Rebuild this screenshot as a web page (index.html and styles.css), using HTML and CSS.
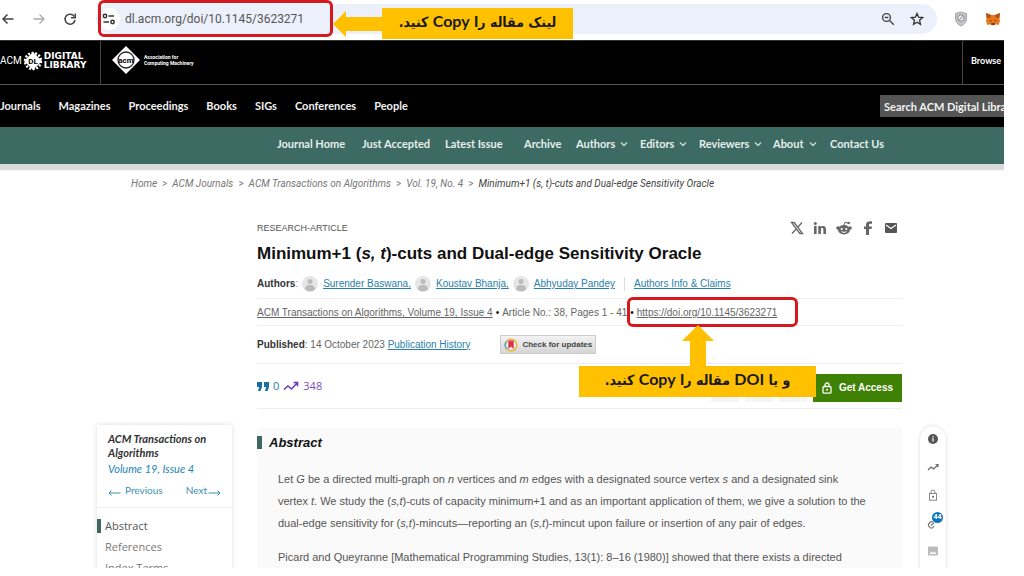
FILE: index.html
```html
<!DOCTYPE html>
<html lang="en">
<head>
<meta charset="utf-8">
<title>Minimum+1 (s, t)-cuts and Dual-edge Sensitivity Oracle</title>
<link rel="stylesheet" href="styles.css">
</head>
<body>
<div class="shot">
  <div class="browser-bar">
    <button class="tool" aria-label="Back"><svg width="14" height="14" viewBox="0 0 14 14"><path d="M12.500 7H2M6.500 2.500L2 7l4.500 4.500" fill="none" stroke="#444" stroke-width="1.500"/></svg></button>
    <button class="tool" aria-label="Forward"><svg width="14" height="14" viewBox="0 0 14 14"><path d="M1.500 7H12M7.500 2.500L12 7l-4.500 4.500" fill="none" stroke="#aaa" stroke-width="1.300"/></svg></button>
    <button class="tool" aria-label="Reload"><svg width="14" height="14" viewBox="0 0 14 14"><path d="M11.300 4.500A5 5 0 1 0 12 8" fill="none" stroke="#444" stroke-width="1.500"/><path d="M12.300 1.500v4.300H8" fill="none" stroke="#444" stroke-width="1.500"/></svg></button>
    <div class="omnibox">
      <span class="site-info"><svg width="14" height="12" viewBox="0 0 14 12"><g fill="none" stroke="#333" stroke-width="1.500"><circle cx="3" cy="3" r="1.700"/><path d="M6.500 3H12M1.500 9H7"/><circle cx="10.500" cy="9" r="1.700"/></g></svg></span>
      <input class="url" type="text" aria-label="Address" value="dl.acm.org/doi/10.1145/3623271">
      <button class="tool" aria-label="Zoom"><svg width="14" height="14" viewBox="0 0 14 14"><circle cx="5.500" cy="5.500" r="3.900" fill="none" stroke="#444" stroke-width="1.400"/><path d="M3.700 5.500h3.600M8.500 8.500l4.300 4.300" stroke="#444" stroke-width="1.400"/></svg></button>
      <button class="tool" aria-label="Bookmark"><svg width="14" height="14" viewBox="0 0 14 14"><path d="M7 1.500l1.600 3.700 4 .4-3 2.700.9 4L7 10.200l-3.500 2.100.9-4-3-2.700 4-.4z" fill="none" stroke="#333" stroke-width="1.300"/></svg></button>
    </div>
    <button class="tool" aria-label="Shield"><svg width="14" height="16" viewBox="0 0 14 16"><path d="M7 1l5.500 1.500v5c0 3.500-2.500 6-5.500 7.500-3-1.500-5.500-4-5.500-7.500v-5z" fill="#c3c6ca" stroke="#a2a6aa"/><circle cx="7" cy="7" r="3.200" fill="#eee" stroke="#888"/><path d="M5.500 8.500l3-3" stroke="#777"/></svg></button>
    <button class="tool" aria-label="Wallet"><svg width="16" height="14" viewBox="0 0 16 14"><path d="M1 1l5 2h4l5-2-.6 5 .6 3-1.500 4-3-.8-1.500 1h-2l-1.500-1-3 .8L1 9l.6-3z" fill="#e8761b"/><path d="M1 1l5 2-1 3H1.600zM15 1l-5 2 1 3h3.400z" fill="#b4521b"/><path d="M4.500 8l2 .5v1zM11.500 8l-2 .5v1z" fill="#222"/><path d="M6.300 11.200h3.400l.3 1.500H6z" fill="#553018"/></svg></button>
  </div>

  <header>
    <div class="brand-bar">
      <a class="dl-logo" href="#">
        <span>ACM</span>
        <svg width="20" height="20" viewBox="0 0 20 20"><circle cx="10" cy="10" r="8" fill="none" stroke="#fff" stroke-width="2.500" stroke-dasharray="2 1.600"/><path d="M10 1l9 9-9 9-9-9z" fill="#fff"/><text x="10" y="13" text-anchor="middle" class="dl-mark">DL</text></svg>
        <span class="dl-words">DIGITAL<br>LIBRARY</span>
      </a>
      <a class="acm-logo" href="#">
        <svg width="28" height="28" viewBox="0 0 28 28"><path d="M14 0l14 14-14 14L0 14z" fill="#fff"/><circle cx="14" cy="14" r="8" fill="#fff" stroke="#222" stroke-width="1.300"/><text x="14" y="17" text-anchor="middle" class="acm-mark">acm</text></svg>
        <span>Association for<br>Computing Machinery</span>
      </a>
      <a class="browse" href="#">Browse</a>
    </div>
    <div class="main-bar">
      <nav class="main-nav">
        <a href="#">Journals</a><a href="#">Magazines</a><a href="#">Proceedings</a><a href="#">Books</a><a href="#">SIGs</a><a href="#">Conferences</a><a href="#">People</a>
      </nav>
      <div class="search"><input type="text" aria-label="Search" value="Search ACM Digital Library"></div>
    </div>
    <nav class="journal-nav">
      <a href="#">Journal Home</a><a href="#">Just Accepted</a><a href="#">Latest Issue</a><a href="#">Archive</a>
      <a href="#">Authors <svg class="chev" width="8" height="6" viewBox="0 0 8 6"><path d="M1 1.500l3 3 3-3"/></svg></a>
      <a href="#">Editors <svg class="chev" width="8" height="6" viewBox="0 0 8 6"><path d="M1 1.500l3 3 3-3"/></svg></a>
      <a href="#">Reviewers <svg class="chev" width="8" height="6" viewBox="0 0 8 6"><path d="M1 1.500l3 3 3-3"/></svg></a>
      <a href="#">About <svg class="chev" width="8" height="6" viewBox="0 0 8 6"><path d="M1 1.500l3 3 3-3"/></svg></a>
      <a href="#">Contact Us</a>
    </nav>
  </header>

  <nav class="crumbs" aria-label="Breadcrumb">
    <a href="#">Home</a><i>&gt;</i><a href="#">ACM Journals</a><i>&gt;</i><a href="#">ACM Transactions on Algorithms</a><i>&gt;</i><a href="#">Vol. 19, No. 4</a><i>&gt;</i><a class="here" href="#">Minimum+1 (s, t)-cuts and Dual-edge Sensitivity Oracle</a>
  </nav>

  <div class="page">
    <aside class="contents">
      <div class="issue">
        <h2>ACM Transactions on Algorithms</h2>
        <a class="volume" href="#">Volume 19, Issue 4</a>
        <div class="pager">
          <a href="#"><svg width="13" height="7" viewBox="0 0 13 7"><path d="M12.500 4H1M3.500 1.500L1 4l2.500 2.500"/></svg>Previous</a>
          <a href="#">Next<svg width="13" height="7" viewBox="0 0 13 7"><path d="M.5 4H12M9.500 1.500L12 4 9.500 6.500"/></svg></a>
        </div>
      </div>
      <nav class="toc"><a class="current" href="#">Abstract</a><a href="#">References</a><a href="#">Index Terms</a></nav>
    </aside>

    <main>
      <div class="kicker">
        <span>RESEARCH-ARTICLE</span>
        <div class="share">
          <a href="#" aria-label="X"><svg width="14" height="14" viewBox="0 0 14 14"><path d="M1.500 1.500h2.700l8.300 11H9.800z" fill="none" stroke="#666" stroke-width="1.300"/><path d="M12 1.500L8 6M6 8.300l-4 4.200" stroke="#666" stroke-width="1.300"/></svg></a>
          <a href="#" aria-label="LinkedIn"><svg width="14" height="14" viewBox="0 0 14 14" fill="#666"><circle cx="2.300" cy="2.500" r="1.500"/><path d="M1 5h2.600v8H1zM5.300 5h2.400v1.200C9 4.200 13 4.300 13 8v5h-2.600V8.500c0-2-2.500-1.800-2.500 0V13H5.300z"/></svg></a>
          <a href="#" aria-label="Reddit"><svg width="16" height="14" viewBox="0 0 16 14"><g fill="#666"><ellipse cx="8" cy="8.800" rx="6" ry="4.700"/><circle cx="1.900" cy="7" r="1.700"/><circle cx="14.100" cy="7" r="1.700"/><circle cx="12.700" cy="2" r="1.300"/></g><path d="M8 4.500l1-3.300 3 .8" fill="none" stroke="#666"/><circle cx="5.700" cy="8" r="1.100" fill="#fff"/><circle cx="10.300" cy="8" r="1.100" fill="#fff"/><path d="M5.500 10.700q2.500 1.500 5 0" fill="none" stroke="#fff"/></svg></a>
          <a href="#" aria-label="Facebook"><svg width="14" height="14" viewBox="0 0 14 14"><path d="M5 14V8H3V5.500h2V4c0-2.700 1.500-4 6-3.600V2.800c-2-.1-3 0-3 1.400v1.300h3L10.500 8H8v6z" fill="#666"/></svg></a>
          <a href="#" aria-label="Email"><svg width="14" height="14" viewBox="0 0 14 14"><rect x="1" y="2" width="12" height="10" rx="1" fill="#555"/><path d="M2 4l5 3.500L12 4" fill="none" stroke="#fff" stroke-width="1.200"/></svg></a>
        </div>
      </div>
      <h1>Minimum+1 (<em>s, t</em>)-cuts and Dual-edge Sensitivity Oracle</h1>
      <div class="row authors">
        <span><b>Authors</b>:</span>
        <svg class="face" width="16" height="16" viewBox="0 0 16 16"><circle cx="8" cy="8" r="8" fill="#e6e6e6"/><circle cx="8" cy="5.500" r="2.500" fill="#bbb"/><path d="M3 13c0-5.500 10-5.500 10 0-2 3-8 3-10 0z" fill="#bbb"/></svg><a href="#">Surender Baswana,</a>
        <svg class="face" width="16" height="16" viewBox="0 0 16 16"><circle cx="8" cy="8" r="8" fill="#e6e6e6"/><circle cx="8" cy="5.500" r="2.500" fill="#bbb"/><path d="M3 13c0-5.500 10-5.500 10 0-2 3-8 3-10 0z" fill="#bbb"/></svg><a href="#">Koustav Bhanja,</a>
        <svg class="face" width="16" height="16" viewBox="0 0 16 16"><circle cx="8" cy="8" r="8" fill="#e6e6e6"/><circle cx="8" cy="5.500" r="2.500" fill="#bbb"/><path d="M3 13c0-5.500 10-5.500 10 0-2 3-8 3-10 0z" fill="#bbb"/></svg><a href="#">Abhyuday Pandey</a>
        <a class="claims" href="#">Authors Info &amp; Claims</a>
      </div>
      <div class="row source">
        <a href="#">ACM Transactions on Algorithms, Volume 19, Issue 4</a><span class="dot">•</span><span>Article No.: 38, Pages 1 - 41</span><span class="dot">•</span><a href="#">https://doi.org/10.1145/3623271</a>
      </div>
      <div class="row published">
        <span><b>Published</b>: 14 October 2023 <a href="#">Publication History</a></span>
        <button class="updates"><svg width="14" height="14" viewBox="0 0 14 14"><circle cx="7" cy="7" r="5.800" fill="#eee" stroke="#e5b93c" stroke-width="1.500"/><path d="M2.500 3.500A5.800 5.800 0 0 0 3 11" fill="none" stroke="#4ab0c4" stroke-width="1.500"/><path d="M4.300 2.500h5.400v8.500L7 8.500 4.300 11z" fill="#df3348"/></svg>Check for updates</button>
      </div>
      <div class="row metrics">
        <svg width="12" height="9" viewBox="0 0 12 9" fill="#176fa6"><path d="M0 0h5v5L3.500 9H1l1.200-4H0zM7 0h5v5l-1.500 4H8l1.200-4H7z"/></svg><span class="cites">0</span>
        <svg width="16" height="10" viewBox="0 0 16 10"><path d="M1 8.500l4-3.500 3.500 3L14 2M10.500 1.500h4v3.700" fill="none" stroke="#6a3fb5" stroke-width="1.600"/></svg><span class="downloads">348</span>
        <div class="actions"><span class="ghost"></span><span class="ghost"></span><span class="ghost"></span>
          <button class="access"><svg width="10" height="12" viewBox="0 0 10 12"><rect x="1" y="4.500" width="8" height="6.700" rx="1" fill="none" stroke="#fff" stroke-width="1.300"/><path d="M3 4.500V3a2 2 0 0 1 4 0v1.500" fill="none" stroke="#fff" stroke-width="1.300"/><circle cx="5" cy="7.800" r="1" fill="#fff"/></svg>Get Access</button></div>
      </div>
      <section class="abstract">
        <h2>Abstract</h2>
        <p>Let <em>G</em> be a directed multi-graph on <em>n</em> vertices and <em>m</em> edges with a designated source vertex <em>s</em> and a designated sink vertex <em>t</em>. We study the (<em>s,t</em>)-cuts of capacity minimum+1 and as an important application of them, we give a solution to the dual-edge sensitivity for (<em>s,t</em>)-mincuts—reporting an (<em>s,t</em>)-mincut upon failure or insertion of any pair of edges.</p>
        <p>Picard and Queyranne [Mathematical Programming Studies, 13(1): 8–16 (1980)] showed that there exists a directed</p>
      </section>
    </main>

    <div class="rail">
      <button aria-label="Information"><svg width="12" height="12" viewBox="0 0 12 12"><circle cx="6" cy="6" r="5" fill="#555"/><path d="M6 5.300v3.200M6 3.200v1.300" stroke="#fff" stroke-width="1.300"/></svg></button>
      <button aria-label="Metrics"><svg width="12" height="12" viewBox="0 0 12 12"><path d="M1 9l3-3 2.500 2L11 4M8.500 3.500H11V6" fill="none" stroke="#666" stroke-width="1.200"/></svg></button>
      <button aria-label="Access"><svg width="12" height="12" viewBox="0 0 12 12"><rect x="2.500" y="4.500" width="7" height="6.700" fill="none" stroke="#888"/><path d="M4 4.500V3a2 2 0 0 1 4 0v1.500" fill="none" stroke="#888"/><circle cx="6" cy="7.800" r="1" fill="#666"/></svg></button>
      <button aria-label="References"><svg width="12" height="12" viewBox="0 0 12 12"><path d="M6 5L4 4.500 1.500 7v2l2 2h2L7 9M4 8.500l3-3" fill="none" stroke="#777" stroke-width="1.200"/></svg><span class="badge">44</span></button>
      <button aria-label="Figures"><svg width="12" height="12" viewBox="0 0 12 12"><rect x="1" y="1.500" width="10" height="9" rx="1" fill="#bbb"/><path d="M2.500 9l2-2.500L6 8l1.500-1.500 2 2.500z" fill="#fff"/></svg></button>
    </div>
  </div>

  <div class="mark mark-url"></div>
  <svg class="arrow-left" width="50" height="26" viewBox="0 0 50 26"><path d="M0 13L13 0v6h37v14H13v6z" fill="#ffc000"/></svg>
  <div class="note note-url" lang="fa" dir="rtl">لینک مقاله را <bdi>Copy</bdi> کنید.</div>
  <div class="mark mark-doi"></div>
  <svg class="arrow-up" width="32" height="42" viewBox="0 0 32 42"><path d="M16 0l16 16h-8v26H8V16H0z" fill="#ffc000"/></svg>
  <div class="note note-doi" lang="fa" dir="rtl">و یا <bdi>DOI</bdi> مقاله را <bdi>Copy</bdi> کنید.</div>
</div>
</body>
</html>
```
FILE: styles.css
```css
* { box-sizing: border-box; }
body {
  margin: 0;
  padding: 0 20px 8px 0;
  height: 100vh;
  overflow: hidden;
  background: #fff;
  color: #555;
  font: 10px/14px "Liberation Sans", Arial, sans-serif;
}
h1, h2, p { margin: 0; }
a { color: inherit; text-decoration: none; }
button, input { margin: 0; padding: 0; border: 0; background: none; font: inherit; color: inherit; }
svg { flex: none; display: block; }
.shot { position: relative; height: 100%; overflow: hidden; }

.browser-bar { display: flex; align-items: center; height: 40px; padding: 0 3px 2px 1px; gap: 17px; }
.tool { display: grid; place-items: center; }
.omnibox { flex: 1; display: flex; align-items: center; gap: 15px; height: 30px; margin-left: 2px; padding: 0 13px 0 2px; border-radius: 15px; background: #ecf0fa; }
.site-info { display: grid; place-items: center; width: 22px; height: 22px; border-radius: 50%; background: #fff; }
.url { flex: 1; margin-left: -10px; font: 12px/16px "Roboto", sans-serif; color: #555; }

header, .contents { font-family: "Lato", sans-serif; }
.brand-bar { display: flex; align-items: stretch; height: 45px; border-top: 1px solid #333; border-bottom: 1px solid #555; background: #000; color: #fff; }
.dl-logo { display: flex; align-items: center; gap: 1px; width: 101px; padding-bottom: 3px; border-right: 1px solid #444; font: 10px/10px "Roboto", sans-serif; }
.dl-words { font: bold 9px/9px "DejaVu Sans", sans-serif; }
.dl-mark { font: bold 8px "Roboto", sans-serif; }
.acm-logo { display: flex; align-items: center; gap: 4px; padding: 0 0 5px 11px; font: bold 5px/6px "Roboto", sans-serif; }
.acm-mark { font: bold 8px "Roboto", sans-serif; }
.browse { display: flex; align-items: center; width: 42px; margin-left: auto; padding: 0 0 4px 8px; border-left: 1px solid #444; font-weight: bold; font-size: 9px; }
.main-bar { display: flex; align-items: center; justify-content: space-between; height: 42px; background: #000; color: #f2f2f2; font-weight: bold; font-size: 11px; }
.main-nav { display: flex; gap: 18px; }
.search { width: 124px; height: 22px; overflow: hidden; background: #555; }
.search input { width: 160px; height: 22px; padding-left: 4px; }
.journal-nav {
  display: grid; grid-template-columns: 85px 83px 79px 52px 64px 59px 74px 57px auto; align-items: center;
  height: 37px; padding-left: 277px; padding-bottom: 3px; background: #3d6a63; color: #e4efec; font-weight: bold; font-size: 11px;
  box-shadow: 0 6px 1px #d9dbda;
}
.journal-nav a { display: flex; align-items: center; gap: 5px; white-space: nowrap; }
.chev { fill: none; stroke: #c5d8d4; stroke-width: 1.5; }

.crumbs { display: flex; gap: 5px; padding: 13px 0 0 131px; font: italic 10px/14px "Roboto", sans-serif; white-space: nowrap; color: #777; }
.crumbs i { font-style: normal; }
.crumbs .here { color: #444; }

.page { display: grid; grid-template-columns: 135px minmax(0, 1fr) 28px; padding: 28px 57px 0 97px; align-items: start; }
.contents { margin-top: 206px; height: 200px; background: #fff; box-shadow: 0 0 5px #ddd; }
.issue { padding: 7px 11px 10px; border-bottom: 1px solid #eee; }
.issue h2 { font: italic bold 11px/14px "Lato", sans-serif; color: #333; }
.volume { display: block; margin-top: 2px; font-size: 11px; font-style: italic; color: #2585b0; }
.pager { display: flex; justify-content: space-between; margin-top: 7px; color: #3d8eb5; font-size: 10px; }
.pager a { display: flex; align-items: center; gap: 4px; }
.pager a + a { gap: 1px; }
.pager svg { fill: none; stroke: #3d8eb5; margin-top: 4px; }
.toc { display: grid; gap: 7px; padding-top: 11px; font: 11px/14px "Open Sans", sans-serif; color: #777; }
.toc a { padding-left: 4px; border-left: 4px solid transparent; }
.toc .current { border-color: #41675f; color: #555; }

main { margin: 0 17px 0 25px; }
.kicker { display: flex; justify-content: space-between; align-items: center; height: 18px; font-size: 9px; }
.share { display: flex; gap: 9px; padding: 0 4px 0 0; }
h1 { padding-top: 5px; font: bold 17px/24px "Liberation Sans", Arial, sans-serif; color: #111; }
.row { display: flex; align-items: center; white-space: nowrap; border-bottom: 1px solid #eee; }
.row b { color: #333; }
.authors { height: 33px; padding-top: 4px; color: #888; }
.authors a, .published a { color: #2b80ab; text-decoration: underline; }
.face { margin: 0 5px 0 4px; }
.authors .claims { margin-left: 9px; padding-left: 9px; border-left: 1px solid #ddd; }
.source { height: 27px; padding-top: 2px; color: #666; }
.source a { text-decoration: underline; }
.dot { margin: 0 3px; color: #111; }
.published { height: 38px; gap: 30px; color: #666; }
.updates { display: flex; align-items: center; gap: 4px; height: 19px; padding: 0 3px; border: 1px solid #ccc; background: linear-gradient(#f3f3f3, #d5d5d5); color: #444; font: bold 8px/14px "Liberation Sans", Arial, sans-serif; }
.metrics { height: 45px; gap: 4px; font: 11px/14px "Open Sans", sans-serif; }
.cites { color: #2b80ab; }
.downloads { color: #7a52bb; }
.actions { display: flex; gap: 6px; margin-left: auto; padding-top: 3px; }
.ghost { width: 28px; background: #f5f5f5; }
.access { display: flex; align-items: center; justify-content: center; gap: 7px; width: 89px; height: 28px; background: #3f8105; color: #fff; font: bold 10px/14px "Liberation Sans", Arial, sans-serif; }
.abstract { margin-top: 19px; height: 200px; padding-top: 8px; background: #fafafa; }
.abstract h2 { padding-left: 7px; border-left: 5px solid #41675f; font: italic bold 13px/13px "Liberation Sans", Arial, sans-serif; color: #111; }
.abstract p { margin: 19px 36px 0 21px; font-size: 11px; line-height: 22px; }
.abstract p + p { margin-top: 12px; }

.rail { display: grid; justify-items: center; gap: 16px; margin-top: 206px; height: 200px; padding-top: 7px; align-content: start; border: 1px solid #eee; border-radius: 14px; box-shadow: 0 0 3px #eee; }
.rail button { position: relative; }
.badge { position: absolute; left: 5px; top: -5px; width: 11px; height: 11px; border-radius: 50%; background: #0a74bb; color: #fff; font: bold 7px/11px "Roboto", sans-serif; }

.mark { position: absolute; border: 3px solid #d6181f; border-radius: 6px; }
.mark-url { left: 98px; top: 0; width: 235px; height: 37px; }
.mark-doi { left: 627px; top: 297px; width: 171px; height: 30px; }
.arrow-left { position: absolute; left: 333px; top: 11px; }
.arrow-up { position: absolute; left: 682px; top: 325px; }
.note { position: absolute; height: 31px; background: #ffc000; color: #1a1a1a; text-align: center; white-space: nowrap; font: bold 14px/26px "DejaVu Sans Condensed", "DejaVu Sans", sans-serif; }
.note bdi { font: bold 16px/26px "Lato", sans-serif; }
.note-url { left: 382px; top: 8px; width: 191px; }
.note-doi { left: 579px; top: 366px; width: 237px; }
```
